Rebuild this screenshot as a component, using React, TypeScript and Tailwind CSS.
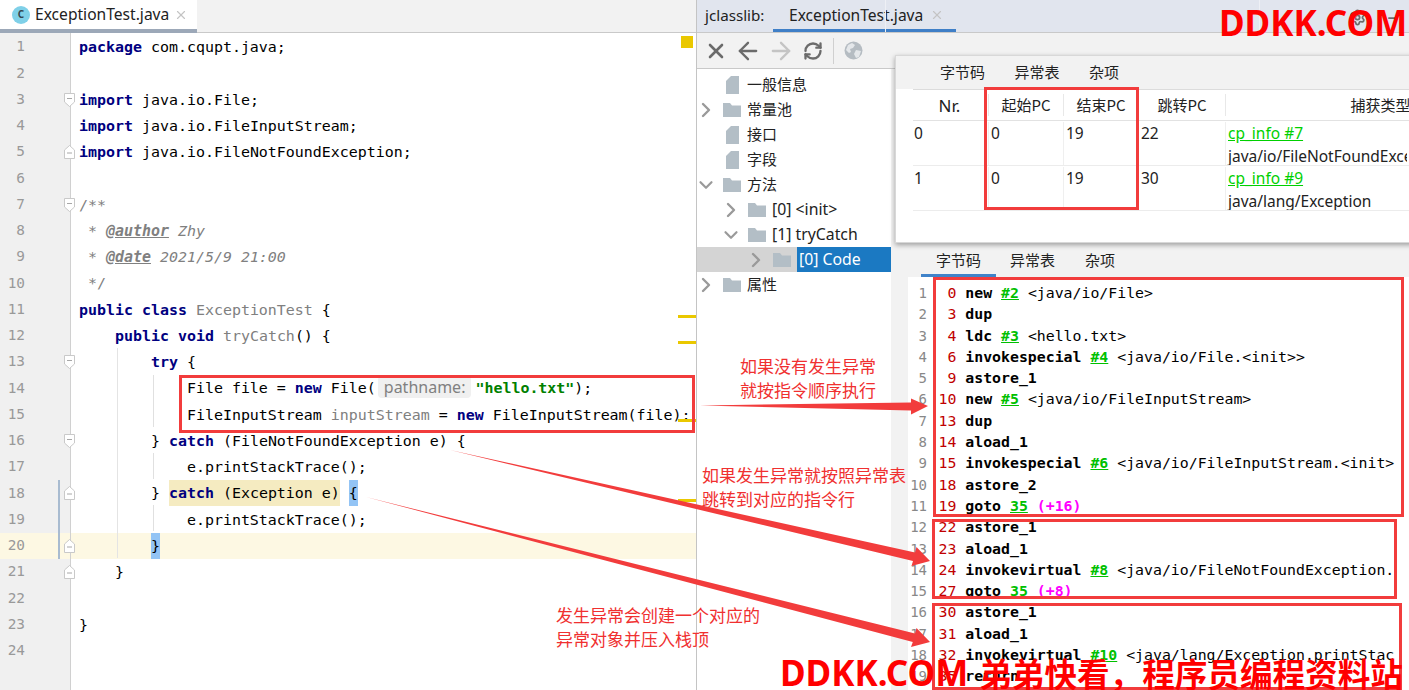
import React from "react";
import { ArrowLeft, ArrowRight, ChevronDown, ChevronRight, Minus, RefreshCw, Settings, X } from "lucide-react";

const mono = "font-['DejaVu_Sans_Mono',monospace]";
const ui = "font-['Noto_Sans_CJK_SC','Noto_Sans',sans-serif]";
const latin = "font-['Noto_Sans','Noto_Sans_CJK_SC',sans-serif]";

const K = ({ children }: { children: React.ReactNode }) => (
  <span className="font-bold text-[#000080]">{children}</span>
);
const G = ({ children }: { children: React.ReactNode }) => (
  <span className="text-[#808080]">{children}</span>
);

const code: React.ReactNode[] = [
  <><K>package</K> com.cqupt.java;</>,
  "",
  <><K>import</K> java.io.File;</>,
  <><K>import</K> java.io.FileInputStream;</>,
  <><K>import</K> java.io.FileNotFoundException;</>,
  "",
  <G>/**</G>,
  <span className="italic text-[#808080]"> * <b className="underline">@author</b> Zhy</span>,
  <span className="italic text-[#808080]"> * <b className="underline">@date</b> 2021/5/9 21:00</span>,
  <G> */</G>,
  <><K>public class</K> <G>ExceptionTest</G> {"{"}</>,
  <>    <K>public void</K> <G>tryCatch</G>() {"{"}</>,
  <>        <K>try</K> {"{"}</>,
  <>            File file = <K>new</K> File(<span className="ml-[2px] mr-[4px] inline-block rounded-[4px] bg-[#f0f0f0] px-[6px] font-['Noto_Sans',sans-serif] text-[16px] leading-[22px] text-[#808080]">pathname:</span><span className="font-bold text-[#008000]">"hello.txt"</span>);</>,
  <>            FileInputStream <G>inputStream</G> = <K>new</K> FileInputStream(file);</>,
  <>        {"} "}<K>catch</K> (FileNotFoundException e) {"{"}</>,
  <>            e.printStackTrace();</>,
  <>        {"} "}<span className="inline-block bg-[#f5ebc1]"><K>catch</K> (Exception e)</span> <span className="inline-block bg-[#93c4f5]">{"{"}</span></>,
  <>            e.printStackTrace();</>,
  <>        <span className="inline-block bg-[#93c4f5]">{"}"}</span></>,
  <>    {"}"}</>,
  "",
  <>{"}"}</>,
  "",
];

const foldTop = [3, 7, 13, 16];
const foldEnd = [5, 18, 20, 21];

function Fold({ up }: { up?: boolean }) {
  return (
    <svg width="11" height="14" viewBox="0 0 11 14" className="absolute right-[-5px] top-[6px]">
      <path
        d={up ? "M.5 13.5h10V5L5.5 .5 .5 5z" : "M.5 .5h10V9l-5 4.5-5-4.5z"}
        fill="#fff"
        stroke="#c9c9c9"
      />
      <path d={up ? "M3 8h5" : "M3 5.5h5"} stroke="#a8a8a8" />
    </svg>
  );
}

function Editor() {
  return (
    <div className="flex w-[697px] shrink-0 flex-col border-r border-[#c4c4c4] bg-white">
      <div className="flex h-[33px] shrink-0 border-b border-[#c9c9c9] bg-[#f2f2f2]">
        <div className="flex h-[33px] w-[197px] items-center border-b-[4px] border-[#9ca8b8] bg-white pl-[12px]">
          <span className="flex h-[18px] w-[18px] items-center justify-center rounded-full bg-[#7fd0e8] text-[10px] font-bold text-[#33454f]">
            C
          </span>
          <span className={`ml-[5px] text-[15.6px] text-[#222] ${latin}`}>ExceptionTest.java</span>
          <X size={14} className="ml-[5px] text-[#c4c4c4]" />
        </div>
      </div>
      <div className="relative flex flex-1 overflow-hidden">
        <div className="w-[71px] shrink-0 border-r border-[#d0d0d0] bg-[#f0f0f0]" />
        <div className="absolute left-0 top-[1px] w-full">
          {code.map((line, i) => {
            const n = i + 1;
            return (
              <div key={n} className={`flex h-[26.25px] items-center ${n === 20 ? "bg-[#fdf8e3]" : ""}`}>
                <div
                  className={`relative flex h-full w-[71px] shrink-0 items-center border-r border-[#d0d0d0] text-[14.4px] text-[#999] ${mono} ${
                    n === 20 ? "" : "bg-[#f0f0f0]"
                  } ${n === 18 || n === 19 || n === 20 ? "after:absolute after:left-[58px] after:top-0 after:h-full after:w-[2px] after:bg-[#a8bbd0]" : ""}`}
                >
                  <span className="w-[25px] text-right">{n}</span>
                  {foldTop.includes(n) && <Fold />}
                  {foldEnd.includes(n) && <Fold up />}
                </div>
                <pre className={`pl-[8px] text-[14.95px] leading-[26px] text-black ${mono}`}>{line}</pre>
              </div>
            );
          })}
        </div>
        <div className="absolute left-[153px] top-[342px] h-[52px] w-px bg-[#e0e0e0]" />
        <div className="absolute left-[153px] top-[420px] h-[26px] w-px bg-[#e0e0e0]" />
        <div className="absolute left-[153px] top-[472px] h-[26px] w-px bg-[#e0e0e0]" />
        <div className="absolute left-[117px] top-[315px] h-[210px] w-px bg-[#e4e4e4]" />
        <div className="absolute left-[681px] top-[3px] h-[12px] w-[12px] bg-[#eac800]" />
        <div className="absolute left-[678px] top-[282px] h-[3px] w-[18px] bg-[#eac800]" />
        <div className="absolute left-[678px] top-[308px] h-[3px] w-[18px] bg-[#eac800]" />
        <div className="absolute left-[678px] top-[386px] h-[3px] w-[18px] bg-[#eac800]" />
        <div className="absolute left-[678px] top-[466px] h-[3px] w-[18px] bg-[#eac800]" />
      </div>
    </div>
  );
}

const tree: { label: string; depth: number; arrow?: "r" | "d"; file?: boolean; sel?: boolean; en?: boolean }[] = [
  { label: "一般信息", depth: 0, file: true },
  { label: "常量池", depth: 0, arrow: "r" },
  { label: "接口", depth: 0, file: true },
  { label: "字段", depth: 0, file: true },
  { label: "方法", depth: 0, arrow: "d" },
  { label: "[0] <init>", depth: 1, arrow: "r", en: true },
  { label: "[1] tryCatch", depth: 1, arrow: "d", en: true },
  { label: "[0] Code", depth: 2, arrow: "r", sel: true, en: true },
  { label: "属性", depth: 0, arrow: "r" },
];

function FolderIcon() {
  return (
    <svg width="18" height="14" viewBox="0 0 18 14" className="shrink-0">
      <path d="M0 0h7l2 2.5h9V14H0z" fill="#b3bec6" />
    </svg>
  );
}

function FileIcon() {
  return (
    <svg width="13" height="18" viewBox="0 0 13 18" className="shrink-0">
      <path d="M5 0h8v18H0V5z" fill="#b3bec6" />
    </svg>
  );
}

function Tree() {
  return (
    <div className="w-[194px] shrink-0 bg-white pt-[3px] text-[#222]">
      {tree.map((t) => {
        const pad = t.depth === 0 ? "" : t.depth === 1 ? "pl-[25px]" : "pl-[50px]";
        return (
          <div key={t.label} className={`flex h-[25px] items-center ${pad} ${t.sel ? "bg-[#d4d4d4]" : ""}`}>
            <span className="flex w-[18px] shrink-0 items-center">
              {t.arrow === "r" && <ChevronRight size={24} className="-ml-[3px] shrink-0 text-[#9a9a9a]" strokeWidth={2.4} />}
              {t.arrow === "d" && <ChevronDown size={22} className="-ml-[2px] shrink-0 text-[#9a9a9a]" strokeWidth={2.4} />}
            </span>
            <span className="ml-[8px] flex w-[24px] shrink-0 items-center">
              {t.file ? <span className="ml-[3px] flex"><FileIcon /></span> : <FolderIcon />}
            </span>
            <span
              className={`flex h-full items-center ${t.en ? `text-[15.8px] ${latin}` : `text-[15px] ${ui}`} ${
                t.sel ? "flex-1 bg-[#1b79c2] pl-[2px] text-white" : ""
              }`}
            >
              {t.label}
            </span>
          </div>
        );
      })}
    </div>
  );
}

function Cell({ w, children, cls = "" }: { w: string; children?: React.ReactNode; cls?: string }) {
  return <div className={`shrink-0 ${w} ${cls}`}>{children}</div>;
}

function ExcRow({ nr, end, to, cp, cls }: { nr: string; end: string; to: string; cp: string; cls: string }) {
  return (
    <div className={`flex h-[45px] border-b border-[#ececec] pt-[1px] text-[15.5px] leading-[23px] ${latin}`}>
      <Cell w="w-[75px]" cls="pl-[1px]">{nr}</Cell>
      <Cell w="w-[75px]" cls="border-l border-[#efefef] pl-[2px]">0</Cell>
      <Cell w="w-[75px]" cls="border-l border-[#efefef] pl-[2px]">{end}</Cell>
      <Cell w="w-[87px]" cls="border-l border-[#efefef] pl-[2px]">{to}</Cell>
      <div className="w-[182px] shrink-0 overflow-hidden whitespace-nowrap border-l border-[#efefef] pl-[2px]">
        <div className="text-[#00d000] underline">{cp}</div>
        <div>{cls}</div>
      </div>
    </div>
  );
}

function PopupTable() {
  return (
    <div className={`absolute left-[198px] top-[55px] h-[188px] w-[530px] border border-[#d8d8d8] bg-white text-[15px] text-[#222] shadow-[0_2px_5px_rgba(0,0,0,0.35)] ${ui}`}>
      <div className="flex h-[33px] items-center gap-[29.5px] bg-[#f2f2f2] pl-[44px]">
        <span>字节码</span>
        <span>异常表</span>
        <span>杂项</span>
      </div>
      <div className="ml-[17px] border-t border-[#dcdcdc]">
        <div className="flex h-[31px] items-center border-b border-[#e2e2e2] text-center">
          <Cell w="w-[75px]" cls={`-translate-x-[1px] translate-y-[1px] text-[17px] ${latin}`}>Nr.</Cell>
          <Cell w="w-[75px]" cls="border-l border-[#e8e8e8]">起始PC</Cell>
          <Cell w="w-[75px]" cls="border-l border-[#e8e8e8]">结束PC</Cell>
          <Cell w="w-[87px]" cls="border-l border-[#e8e8e8]">跳转PC</Cell>
          <div className="w-[310px] shrink-0 border-l border-[#e8e8e8]">捕获类型</div>
        </div>
        <ExcRow nr="0" end="19" to="22" cp="cp_info #7" cls="java/io/FileNotFoundException" />
        <ExcRow nr="1" end="19" to="30" cp="cp_info #9" cls="java/lang/Exception" />
      </div>
    </div>
  );
}

const Num = ({ children }: { children: string }) => <span className="text-[#c00000]">{children}</span>;
const Op = ({ children }: { children: string }) => <b className="font-bold">{children}</b>;
const Ref = ({ children }: { children: string }) => <b className="font-bold text-[#00c000] underline">{children}</b>;
const Off = ({ children }: { children: string }) => <b className="font-bold text-[#ff00ff]">{children}</b>;

const bytecode: React.ReactNode[] = [
  <> <Num>0</Num> <Op>new</Op> <Ref>#2</Ref> {"<java/io/File>"}</>,
  <> <Num>3</Num> <Op>dup</Op></>,
  <> <Num>4</Num> <Op>ldc</Op> <Ref>#3</Ref> {"<hello.txt>"}</>,
  <> <Num>6</Num> <Op>invokespecial</Op> <Ref>#4</Ref> {"<java/io/File.<init>>"}</>,
  <> <Num>9</Num> <Op>astore_1</Op></>,
  <><Num>10</Num> <Op>new</Op> <Ref>#5</Ref> {"<java/io/FileInputStream>"}</>,
  <><Num>13</Num> <Op>dup</Op></>,
  <><Num>14</Num> <Op>aload_1</Op></>,
  <><Num>15</Num> <Op>invokespecial</Op> <Ref>#6</Ref> {"<java/io/FileInputStream.<init>"}</>,
  <><Num>18</Num> <Op>astore_2</Op></>,
  <><Num>19</Num> <Op>goto</Op> <Ref>35</Ref> <Off>(+16)</Off></>,
  <><Num>22</Num> <Op>astore_1</Op></>,
  <><Num>23</Num> <Op>aload_1</Op></>,
  <><Num>24</Num> <Op>invokevirtual</Op> <Ref>#8</Ref> {"<java/io/FileNotFoundException."}</>,
  <><Num>27</Num> <Op>goto</Op> <Ref>35</Ref> <Off>(+8)</Off></>,
  <><Num>30</Num> <Op>astore_1</Op></>,
  <><Num>31</Num> <Op>aload_1</Op></>,
  <><Num>32</Num> <Op>invokevirtual</Op> <Ref>#10</Ref> {"<java/lang/Exception.printStac"}</>,
  <><Num>35</Num> <Op>return</Op></>,
];

function Bytecode() {
  return (
    <div className="flex min-w-0 flex-1 flex-col overflow-hidden bg-[#f2f2f2]">
      <div className={`flex h-[33px] shrink-0 items-end text-[15px] text-[#222] ${ui}`}>
        <span className="ml-[30px] h-[33px] w-[75px] border-b-[3px] border-[#4083c9] pl-[15px] pt-[5px]">字节码</span>
        <span className="ml-[14px] h-[33px] pt-[5px]">异常表</span>
        <span className="ml-[30px] h-[33px] pt-[5px]">杂项</span>
      </div>
      <div className={`ml-[17px] flex-1 bg-white pt-[6px] text-[14.85px] leading-[21.3px] text-black ${mono}`}>
        {bytecode.map((line, i) => (
          <div key={i} className="flex h-[21.3px]">
            <span className="w-[19px] shrink-0 text-right text-[14px] text-[#888]">{i + 1}</span>
            <pre className={`ml-[11.5px] whitespace-pre ${mono}`}>{line}</pre>
          </div>
        ))}
      </div>
    </div>
  );
}

function Right() {
  return (
    <div className="relative flex min-w-0 flex-1 flex-col bg-white">
      <div className={`relative flex h-[33px] shrink-0 items-end border-b border-[#c9c9c9] bg-[#e1e5ee] pl-[8px] text-[15.6px] text-[#222] ${latin}`}>
        <span className="w-[68px] pb-[5px] text-[15.2px]">jclasslib:</span>
        <div className="flex h-[32px] w-[183px] items-center border-b-[3px] border-[#3f7fc7] pl-[16px]">
          <span className="translate-y-[1px]">ExceptionTest.java</span>
          <X size={14} className="ml-[7px] text-[#c4c4c4]" />
        </div>
        <div className="absolute left-[188px] top-0 h-full w-px bg-[#eef0f5]" />
        <div className="absolute left-[562px] top-0 h-full w-px bg-[#eef0f5]" />
        <Settings size={17} strokeWidth={2.5} className="absolute left-[652px] top-[9px] text-[#6b6b6b]" />
        <Minus size={14} strokeWidth={3} className="absolute left-[689px] top-[11px] text-[#6b6b6b]" />
      </div>
      <div className="flex h-[36px] shrink-0 items-center border-b border-[#c9c9c9] bg-[#f2f2f2] pl-[7px]">
        <X size={24} strokeWidth={2.6} className="text-[#6b6b6b]" />
        <ArrowLeft size={28} strokeWidth={2} className="ml-[6px] text-[#6b6b6b]" />
        <ArrowRight size={28} strokeWidth={2} className="ml-[5px] text-[#c4c4c4]" />
        <RefreshCw size={20} strokeWidth={2.8} className="ml-[8px] text-[#6b6b6b]" />
        <span className="ml-[10px] h-[26px] w-px bg-[#d0d0d0]" />
        <svg width="19" height="19" viewBox="0 0 19 19" className="ml-[10px]">
          <circle cx="9.5" cy="9.5" r="9" fill="#b5bcc2" />
          <path d="M4 4l4-2 3 2-2 3-3 1 1 3-2 1-3-3zM12 9l5 1-2 6-3 1-2-4z" fill="#e4e7ea" />
        </svg>
      </div>
      <div className="flex min-h-0 flex-1 bg-[#f2f2f2]">
        <Tree />
        <div className="flex min-w-0 flex-1 flex-col">
          <div className="h-[175px] shrink-0" />
          <Bytecode />
        </div>
      </div>
      <PopupTable />
    </div>
  );
}

/* red notes drawn over the shot */
function Overlay() {
  const notes = "absolute whitespace-nowrap text-[17px] leading-[23.5px] text-[#f03030] " + ui;
  const box = "absolute border-[3px] border-[#f23c3c]";
  return (
    <div className="pointer-events-none absolute inset-0">
      <div className={`${box} left-[179px] top-[375px] h-[58px] w-[516px]`} />
      <div className={`${box} left-[984px] top-[87px] h-[123px] w-[155px]`} />
      <div className={`${box} left-[933px] top-[277px] h-[240px] w-[471px]`} />
      <div className={`${box} left-[932px] top-[519px] h-[80px] w-[465px]`} />
      <div className={`${box} left-[932px] top-[603px] h-[87px] w-[470px]`} />
      <svg width="1409" height="690" className="absolute left-0 top-0">
        <path d="M700 405.5 L911 402.5 L911 398.5 L928 406 L911 414.5 L911 410.5z" fill="#f23c3c" />
        <path d="M450 450 L915 552.5 L916.5 547 L930 561 L911.5 566 L913 561z" fill="#f23c3c" />
        <path d="M366 497 L915 633.5 L916.5 628 L930 642 L911 647 L912.8 642z" fill="#f23c3c" />
      </svg>
      <div className={`${notes} left-[740px] top-[354px]`}>如果没有发生异常<br />就按指令顺序执行</div>
      <div className={`${notes} left-[702px] top-[463px]`}>如果发生异常就按照异常表<br />跳转到对应的指令行</div>
      <div className={`${notes} left-[556px] top-[603px]`}>发生异常会创建一个对应的<br />异常对象并压入栈顶</div>
      <div className="absolute left-[1219px] top-[2px] font-['Noto_Sans',sans-serif] text-[35px] font-bold leading-[42px] text-[#ff0000]">
        DDKK.COM
      </div>
      <div className="absolute left-[780px] top-[652px] flex items-center whitespace-nowrap font-['Noto_Sans','Noto_Sans_CJK_SC',sans-serif] text-[35px] font-bold leading-[42px] text-[#ff0000]">
        DDKK.COM
        <span className="ml-[11px] font-['Noto_Sans_CJK_SC',sans-serif] text-[32.6px]">弟弟快看，程序员编程资料站</span>
      </div>
    </div>
  );
}

export default function App() {
  return (
    <div className="relative flex h-[690px] w-[1409px] overflow-hidden bg-white">
      <Editor />
      <Right />
      <Overlay />
    </div>
  );
}
